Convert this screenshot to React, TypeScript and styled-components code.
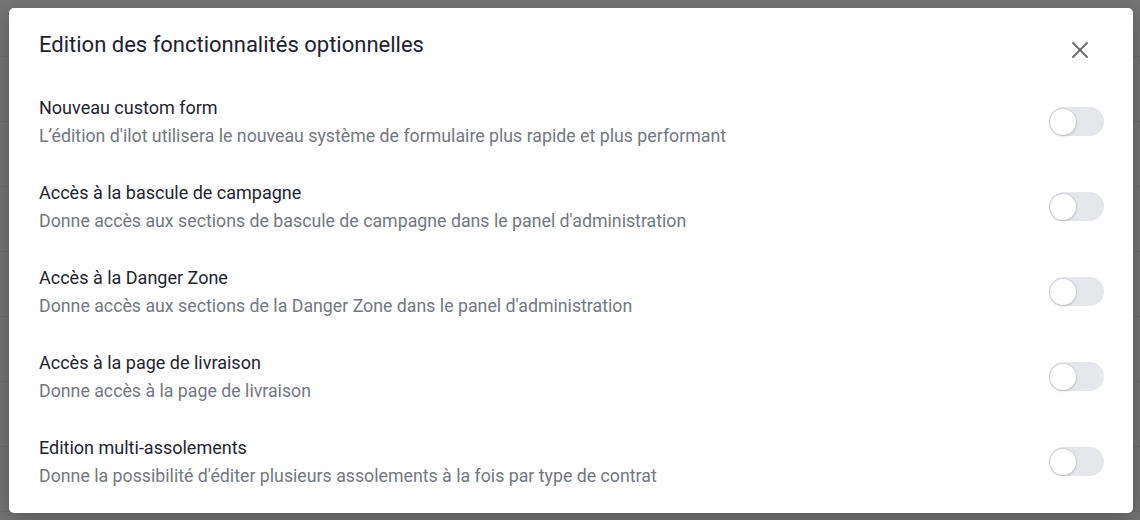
import React, { useState } from "react";
import styled, { createGlobalStyle } from "styled-components";

const Global = createGlobalStyle`
  html, body { margin: 0; padding: 0; }
  body { font-family: Roboto, "Noto Sans", Arial, sans-serif; background: #747474; }
  * { box-sizing: border-box; }
`;

const Backdrop = styled.div`
  width: 1140px;
  height: 520px;
  overflow: hidden;
  padding: 8px 7px 7px 9px;
  background-color: #747474;
  background-image: repeating-linear-gradient(
    to bottom,
    transparent 0px,
    transparent 56px,
    #6c6c6c 56px,
    #6c6c6c 57px,
    transparent 57px,
    transparent 65px
  );
`;

const Modal = styled.div`
  width: 1124px;
  height: 505px;
  background: #ffffff;
  border-radius: 5px;
  box-shadow: 0 6px 20px rgba(0, 0, 0, 0.25);
  padding: 22px 29px 0 30px;
  display: flex;
  flex-direction: column;
`;

const Header = styled.div`
  display: flex;
  align-items: flex-start;
  justify-content: space-between;
`;

const Title = styled.h2`
  margin: 0;
  font-size: 22px;
  line-height: 30px;
  font-weight: 400;
  color: #1d2130;
`;

const CloseButton = styled.button`
  border: none;
  background: transparent;
  padding: 0;
  margin: 8px 12px 0 0;
  width: 24px;
  height: 24px;
  display: flex;
  align-items: center;
  justify-content: center;
  color: #6b6b6b;
  cursor: pointer;
`;

const List = styled.div`
  margin-top: 33px;
  display: flex;
  flex-direction: column;
  gap: 29px;
`;

const Row = styled.div`
  display: flex;
  align-items: center;
  justify-content: space-between;
`;

const Texts = styled.div`
  display: flex;
  flex-direction: column;
`;

const Label = styled.div`
  font-size: 18px;
  line-height: 26px;
  color: #1f2330;
`;

const Description = styled.div`
  font-size: 17.75px;
  line-height: 30px;
  color: #737780;
`;

const Track = styled.button<{ $on: boolean }>`
  position: relative;
  width: 55px;
  height: 29px;
  border-radius: 15px;
  border: none;
  padding: 0;
  margin-top: -3px;
  background: ${(p) => (p.$on ? "#3b82f6" : "#e6e7eb")};
  cursor: pointer;
`;

const Thumb = styled.span<{ $on: boolean }>`
  position: absolute;
  top: 1.5px;
  left: ${(p) => (p.$on ? "28px" : "1px")};
  width: 26px;
  height: 26px;
  border-radius: 50%;
  background: #ffffff;
  box-shadow: 0 0 0 1px rgba(0, 0, 0, 0.06), 0 1px 3px rgba(0, 0, 0, 0.18);
  transition: left 0.15s;
`;

const features = [
  {
    label: "Nouveau custom form",
    description:
      "L’édition d'ilot utilisera le nouveau système de formulaire plus rapide et plus performant",
  },
  {
    label: "Accès à la bascule de campagne",
    description:
      "Donne accès aux sections de bascule de campagne dans le panel d'administration",
  },
  {
    label: "Accès à la Danger Zone",
    description:
      "Donne accès aux sections de la Danger Zone dans le panel d'administration",
  },
  {
    label: "Accès à la page de livraison",
    description: "Donne accès à la page de livraison",
  },
  {
    label: "Edition multi-assolements",
    description:
      "Donne la possibilité d'éditer plusieurs assolements à la fois par type de contrat",
  },
];

function Toggle() {
  const [on, setOn] = useState(false);
  return (
    <Track $on={on} onClick={() => setOn(!on)} aria-pressed={on}>
      <Thumb $on={on} />
    </Track>
  );
}

export default function App() {
  return (
    <>
      <Global />
      <Backdrop>
        <Modal>
          <Header>
            <Title>Edition des fonctionnalités optionnelles</Title>
            <CloseButton aria-label="Fermer">
              <svg width="24" height="24" viewBox="0 0 24 24" fill="none">
                <path
                  d="M5 5L19 19M19 5L5 19"
                  stroke="currentColor"
                  strokeWidth="1.8"
                  strokeLinecap="round"
                />
              </svg>
            </CloseButton>
          </Header>
          <List>
            {features.map((f) => (
              <Row key={f.label}>
                <Texts>
                  <Label>{f.label}</Label>
                  <Description>{f.description}</Description>
                </Texts>
                <Toggle />
              </Row>
            ))}
          </List>
        </Modal>
      </Backdrop>
    </>
  );
}
